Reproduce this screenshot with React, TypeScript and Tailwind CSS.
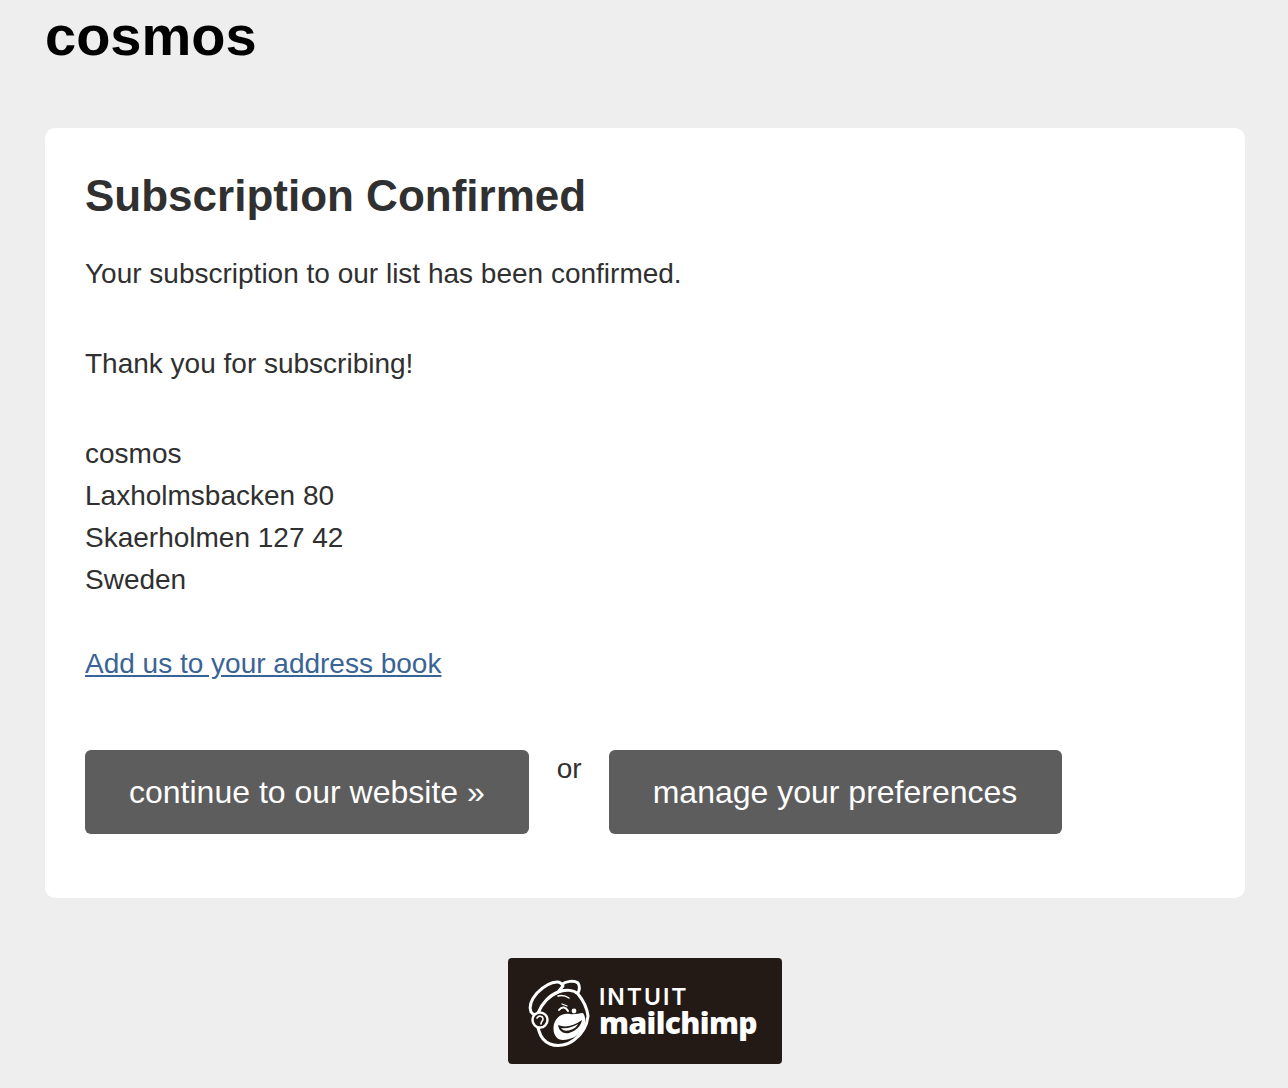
const MonkeyLogo = () => {
  return (
    <svg viewBox="0 0 72 80" className="h-[80px] w-[72px]" fill="#231a15" stroke="#fff" strokeWidth="3" strokeLinejoin="round">
      {/* cap */}
      <path d="M41 14C46 10 54 9 58 12C60 15 60 20 57 23C50 19 44 19 38 21Z" />
      {/* head */}
      <path d="M38 21C46 18 54 19 58 23C63 29 67 37 68 45C67 55 62 63 54 69C48 74 38 76 30 73C25 71 21 67 19 60L14 44C20 32 28 25 38 21Z" />
      {/* headband */}
      <path d="M11 41C9 36 11 29 17 22C23 16 31 11 37 11C40 11 42 13 43 15L38 21C30 24 22 32 18 42C16 44 13 44 11 41Z" />
      {/* ear */}
      <circle cx="20" cy="49" r="7.5" strokeWidth="2.4" />
      <path d="M17 47C19 44 23 45 23 48C23 50 21 50 21 53" fill="none" strokeWidth="1.6" strokeLinecap="round" />
      {/* muzzle */}
      <path d="M34 53C37 44 44 42 50 43C54 44 59 42 63 42C66 46 66 52 63 58C59 65 50 69 43 69C36 69 32 62 34 53Z" fill="#fff" stroke="none" />
      {/* mouth */}
      <path d="M38 54C45 57 54 55 62 49C61 55 56 60 49 62C43 63 39 60 38 54Z" stroke="none" />
      <path d="M41 57C47 58 53 56 58 53C56 57 52 59 48 59.5C45 60 42 59 41 57Z" fill="#fff" stroke="none" />
      {/* wink, eye, brow */}
      <path d="M39 39C42 35 46 36 48 40" fill="none" strokeWidth="2" strokeLinecap="round" />
      <path d="M42 33L47 35" fill="none" strokeWidth="1.3" strokeLinecap="round" />
      <circle cx="54" cy="40" r="2.4" fill="#fff" stroke="none" />
      <path d="M38 25C42 24 46 25 49 27" fill="none" strokeWidth="1.5" strokeLinecap="round" />
    </svg>
  );
};

const actionButton =
  "rounded-[6px] bg-[#5d5d5d] py-[21px] pl-[44px] text-[32px] leading-[42px] text-white";

const App = () => {
  return (
    <div className="min-h-[1088px] bg-[#eeeeee] px-[45px] font-['Liberation_Sans',Arial,sans-serif] text-[#303030]">
      <h1 className="pb-[60px] pt-[4px] text-[56px] font-bold leading-[64px] text-black">cosmos</h1>

      <main className="w-[1200px] rounded-[10px] bg-white px-[40px] pb-[64px] pt-[40px]">
        <h2 className="text-[44px] font-bold leading-[56px]">Subscription Confirmed</h2>

        <div className="mt-[29px] text-[28px] leading-[42px]">
          <p>Your subscription to our list has been confirmed.</p>
          <p className="mt-[48px]">Thank you for subscribing!</p>
          <p className="mt-[48px]">
            cosmos
            <br />
            Laxholmsbacken 80
            <br />
            Skaerholmen 127 42
            <br />
            Sweden
          </p>
          <p className="mt-[42px]">
            <a href="#" className="text-[#3a6496] underline">
              Add us to your address book
            </a>
          </p>
        </div>

        <div className="mt-[65px] flex items-start">
          <a href="#" className={`${actionButton} pr-[44px]`}>
            continue to our website »
          </a>
          <span className="ml-[28px] mr-[27px] pt-[1px] text-[28px] leading-[36px]">or</span>
          <a href="#" className={`${actionButton} pr-[45px]`}>
            manage your preferences
          </a>
        </div>
      </main>

      <footer className="ml-[2px] mt-[60px] flex justify-center">
        <a
          href="#"
          className="flex h-[106px] w-[274px] items-center gap-[7px] rounded-[4px] bg-[#231a15] pl-[12px] text-white"
        >
          <MonkeyLogo />
          <span className="flex flex-col">
            <span className="font-['Inter',sans-serif] text-[23px] font-semibold leading-[24px] tracking-[2px]">INTUIT</span>
            <span className="font-['Open_Sans',sans-serif] text-[30px] font-extrabold leading-[28px] tracking-[-0.6px]">
              mailchimp
            </span>
          </span>
        </a>
      </footer>
    </div>
  );
};

export default App;
